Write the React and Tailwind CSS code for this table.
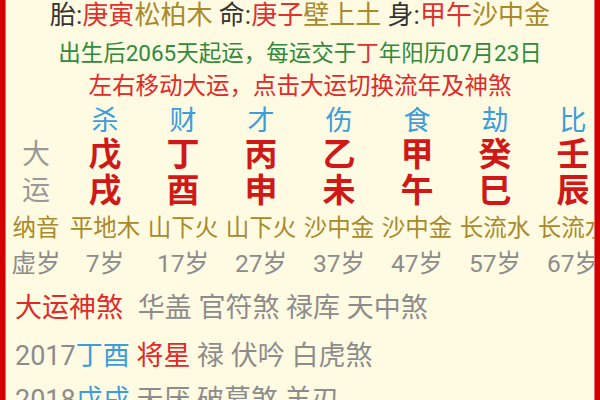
import React from "react";

const cols = [
  { god: "杀", stem: "戊", branch: "戌", nayin: "平地木", age: "7岁" },
  { god: "财", stem: "丁", branch: "酉", nayin: "山下火", age: "17岁" },
  { god: "才", stem: "丙", branch: "申", nayin: "山下火", age: "27岁" },
  { god: "伤", stem: "乙", branch: "未", nayin: "沙中金", age: "37岁" },
  { god: "食", stem: "甲", branch: "午", nayin: "沙中金", age: "47岁" },
  { god: "劫", stem: "癸", branch: "巳", nayin: "长流水", age: "57岁" },
  { god: "比", stem: "壬", branch: "辰", nayin: "长流水", age: "67岁" },
];

const grid = "grid grid-cols-[60px_repeat(7,78px)] whitespace-nowrap";

export default function App() {
  return (
    <div
      className="w-[600px] h-[400px] overflow-hidden flex bg-[#fffbe2]"
      style={{ fontFamily: 'Roboto, "Noto Sans CJK SC", "Noto Sans", sans-serif' }}
    >
      <div className="w-[6px] shrink-0 bg-[#d20000] border-r border-[#e87070]" />
      <div className="flex-1 min-w-0 overflow-hidden flex flex-col">
        <div className="h-[30px] leading-[30px] text-[26px] text-center whitespace-nowrap text-[#333]">
          胎:<span className="text-[#e03131]">庚寅</span>
          <span className="text-[#a8892c]">松柏木</span> 命:
          <span className="text-[#e03131]">庚子</span>
          <span className="text-[#a8892c]">壁上土</span> 身:
          <span className="text-[#e03131]">甲午</span>
          <span className="text-[#a8892c]">沙中金</span>
        </div>
        <div className="h-[46px] leading-[46px] text-[22.5px] text-center whitespace-nowrap text-[#2f8a3c]">
          出生后2065天起运，每运交于<span className="text-[#e03131]">丁</span>年阳历07月23日
        </div>
        <div className="h-[20px] leading-[20px] text-[23.5px] text-center whitespace-nowrap text-[#e02a2a]">
          左右移动大运，点击大运切换流年及神煞
        </div>

        <div className={grid + " h-[50px] leading-[50px] text-[27px] text-[#3b9ddc]"}>
          <div />
          {cols.map((c) => (
            <div key={c.god} className="text-center">{c.god}</div>
          ))}
        </div>
        <div className={grid + " h-[18px] leading-[18px] text-[33px]"}>
          <div className="text-center text-[28px] text-[#999]">大</div>
          {cols.map((c) => (
            <div key={c.god} className="text-center font-bold text-[#d01818]">{c.stem}</div>
          ))}
        </div>
        <div className={grid + " h-[54px] leading-[54px] text-[33px]"}>
          <div className="text-center text-[28px] text-[#999]">运</div>
          {cols.map((c) => (
            <div key={c.god} className="text-center font-bold text-[#d01818]">{c.branch}</div>
          ))}
        </div>
        <div className={grid + " h-[20px] leading-[20px] text-[23.5px] text-[#a8892c]"}>
          <div className="text-center">纳音</div>
          {cols.map((c) => (
            <div key={c.god} className="text-center">{c.nayin}</div>
          ))}
        </div>
        <div className={grid + " h-[52px] leading-[52px] text-[24.5px] text-[#8c8c8c]"}>
          <div className="text-center">虚岁</div>
          {cols.map((c) => (
            <div key={c.god} className="text-center">{c.age}</div>
          ))}
        </div>

        <div className="h-[36px] leading-[36px] pl-[9px] text-[27px] whitespace-nowrap text-[#8c8c8c]">
          <span className="text-[#e02a2a] mr-[8px]">大运神煞</span> 华盖 官符煞 禄库 天中煞
        </div>
        <div className="h-[60px] leading-[60px] pl-[9px] text-[27px] whitespace-nowrap text-[#8c8c8c]">
          2017<span className="text-[#3b9ddc]">丁酉</span> <span className="text-[#e02a2a]">将星</span> 禄 伏吟 白虎煞
        </div>
        <div className="h-[28px] leading-[28px] pl-[9px] text-[27px] whitespace-nowrap text-[#8c8c8c]">
          2018<span className="text-[#3b9ddc]">戊戌</span> 天厌 破墓煞 羊刃
        </div>
      </div>
      <div className="w-[6px] shrink-0 bg-[#d20000] border-l border-[#e87070]" />
    </div>
  );
}
